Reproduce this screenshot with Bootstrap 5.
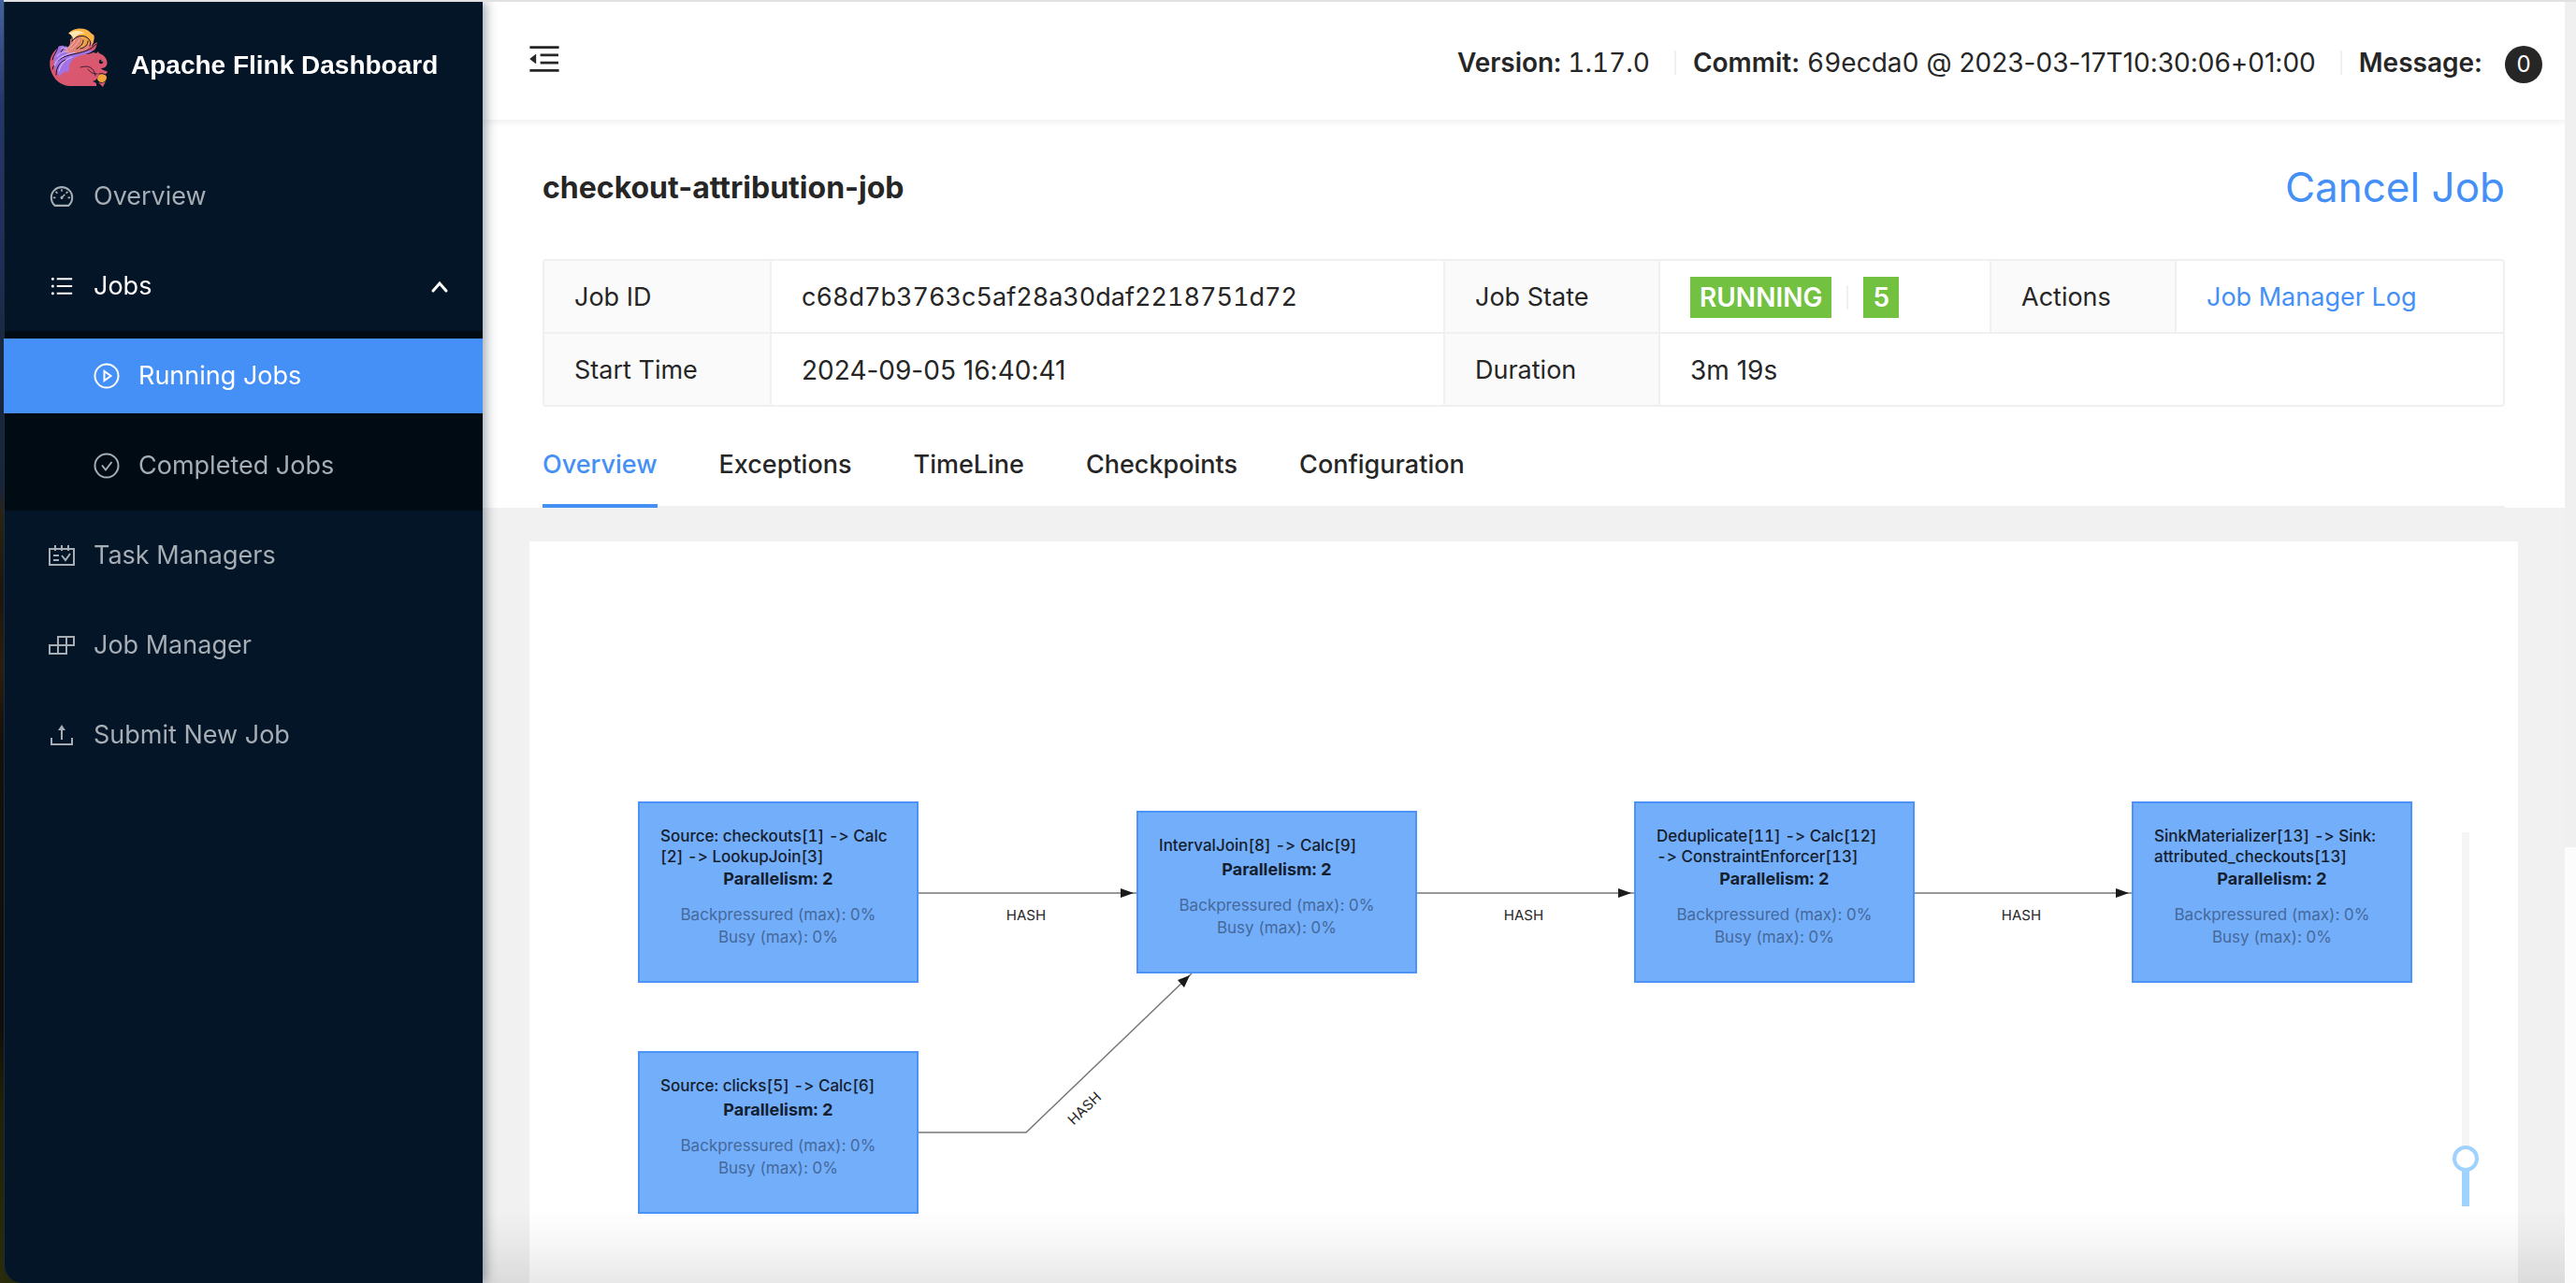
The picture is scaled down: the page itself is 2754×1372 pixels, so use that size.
<!DOCTYPE html>
<html lang="en">
<head>
<meta charset="utf-8">
<meta name="viewport" content="width=device-width, initial-scale=1">
<title>Apache Flink Web Dashboard</title>
<link href="https://cdn.jsdelivr.net/npm/bootstrap@5.3.0/dist/css/bootstrap.min.css" rel="stylesheet">
<style>
  :root { --flink-blue: #4590f7; --line: #f0f0f0; --ink: #262626; }
  body {
    font-family: Inter, "Liberation Sans", sans-serif; font-size: 27px; line-height: 44px;
    font-variant-ligatures: no-contextual;
    color: var(--ink); height: 100vh; overflow: hidden; padding-left: 4px;
    background: linear-gradient(#44639c 0, #26366a 8%, #1f2e58 20%, #1a2a42 26%, #18243a 38%, #2a2414 40%, #1c1610 46%, #2c1e10 52%, #14100c 58%, #110d0c 80%, #1f2208 86%, #2a2c0c 100%);
  }
  .even-digits { font-variant-numeric: tabular-nums; }
  .top-edge { height: 2px; background: #e1e1e1; flex: none; }
  .side-menu {
    width: 512px; background: #031526; z-index: 3; border-bottom-left-radius: 20px;
    box-shadow: 4px 0 12px rgba(0, 21, 41, .35); border-left: 1px solid #1c2c3b;
  }
  .brand { height: 128px; padding: 28px 0 0 47px; gap: 24px; color: #fff; font: 700 28px/44px "Liberation Sans", Arial, sans-serif; }
  .brand svg { width: 64px; height: 64px; }
  .brand span { margin-top: 18px; }
  .side-list { display: flex; flex-direction: column; gap: 16px; padding-top: 40px; }
  .side-list a, .side-list button {
    display: flex; align-items: center; gap: 20px; width: 100%; height: 80px;
    padding: 0 34px 0 47px; color: #a6adb4; text-decoration: none; background: none; border: 0; text-align: left;
  }
  .side-list button { color: #fff; }
  .side-list svg { width: 28px; height: 28px; flex: none; }
  .side-list .chev { width: 24px; height: 24px; margin-left: auto; }
  .sub-list { display: flex; flex-direction: column; gap: 16px; background: #010b14; padding: 8px 0; margin: 8px 0 -8px; }
  .sub-list a { padding-left: 95px; }
  .sub-list a.active { background: var(--flink-blue); color: #fff; margin-left: -1px; padding-left: 96px; width: calc(100% + 1px); }
  .ico { fill: currentColor; }
  .ico-line { fill: none; stroke: currentColor; stroke-width: 2; }
  .top-bar { height: 126px; font-size: 28px; background: #fff; box-shadow: 0 2px 8px rgba(0, 21, 41, .08); z-index: 2; padding: 0 24px 0 46px; }
  .top-bar .fold { border: 0; background: none; padding: 0; line-height: 1; color: var(--ink); }
  .top-bar .fold svg { width: 40px; height: 40px; display: block; }
  .vr-line { width: 2px; height: 26px; background: var(--line); }
  .top-bar .vr-line { margin: 0 18px 0 26px; }
  .msg-count { width: 40px; height: 40px; border-radius: 20px; background: var(--ink); color: #fff; font-size: 24px; line-height: 40px; text-align: center; }
  .job-head { background: #fff; padding: 40px 64px 0; }
  .job-name { font-size: 32px; line-height: 66px; font-weight: 700; margin: 0; }
  .cancel-link { font-size: 44px; line-height: 64px; color: var(--flink-blue); text-decoration: none; }
  .facts { width: 100%; margin-top: 43px; border: 2px solid var(--line); border-radius: 4px; border-collapse: separate; border-spacing: 0; }
  .facts th, .facts td { height: 76px; padding: 2px 30px 0 32px; font-weight: 400; vertical-align: middle; }
  .facts th { background: #fafafa; }
  .facts th, .facts td:not(:last-child) { border-right: 2px solid var(--line); }
  .facts tr:first-child > * { border-bottom: 2px solid var(--line); height: 78px; }
  .state-tag { background: #73c140; color: #fff; font-size: 28px; font-weight: 600; line-height: 44px; padding: 0 10px; }
  .when { font-size: 28px; }
  .facts a { color: var(--flink-blue); text-decoration: none; }
  .job-tabs { gap: 66px; margin-top: 24px; border-bottom: 2px solid var(--line); }
  .job-tabs a { color: var(--ink); font-weight: 500; text-decoration: none; padding: 16px 0 20px; margin-bottom: -2px; border-bottom: 4px solid transparent; }
  .job-tabs a.active { color: var(--flink-blue); border-color: var(--flink-blue); }
  .work { background: #f1f1f1; padding: 36px 50px 0; }
  .graph { background: #fff; }
  .flow-node { position: absolute; width: 300px; padding: 24px 22px 35px; background: #73aefa; border: 2px solid #4b93f8; color: #15202e; font-size: 17px; text-align: center; }
  .flow-node h2 { font-size: 17px; line-height: 22px; min-height: 24px; font-weight: 500; text-align: left; margin: 0; white-space: nowrap; }
  .flow-node p { line-height: 24px; margin: 0; }
  .flow-node .par { font-size: 18px; font-weight: 700; margin-top: 1px; }
  .flow-node .load { margin-top: 14px; color: #45699a; }
  .n-checkouts { left: 116px; top: 278px; }
  .n-clicks { left: 116px; top: 545px; }
  .n-join { left: 649px; top: 288px; }
  .n-dedup { left: 1181px; top: 278px; }
  .n-sink { left: 1713px; top: 278px; }
  .edges { position: absolute; left: 0; top: 0; width: 2126px; height: 800px; font-size: 15px; }
  .zoom-range {
    position: absolute; right: -144px; top: 497px; width: 400px; height: 28px; transform: rotate(-90deg);
    appearance: none; -webkit-appearance: none; margin: 0;
    background: linear-gradient(90deg, #a0d2ff 0 50px, #f5f5f5 50px) center / 100% 8px no-repeat; border-radius: 4px;
  }
  .zoom-range::-webkit-slider-thumb { -webkit-appearance: none; width: 28px; height: 28px; border-radius: 50%; background: #fff; border: 4px solid #a0d2ff; }
  .scroll-track { width: 12px; background: #fcfcfc; z-index: 4; }
  .scroll-thumb { height: 66%; background: #f0f0f0; }
  .fade-out { position: fixed; left: 516px; right: 0; bottom: 0; height: 80px; background: linear-gradient(transparent, rgba(0, 0, 0, .03) 45%, rgba(0, 0, 0, .09)); pointer-events: none; z-index: 2; }
</style>
</head>
<body class="d-flex flex-column">
<div class="top-edge"></div>
<div class="d-flex flex-grow-1 overflow-hidden">
  <nav class="side-menu flex-shrink-0" aria-label="Main">
    <div class="brand d-flex">
      <svg viewBox="0 0 64 64" aria-hidden="true">
        <path fill="#d9586f" d="M10 21C2 27 0 36 2 44c3 11 10 17 20 18h29c1-3-1-4-4-5 4-1 6-4 7-7 4 1 7 0 9-3-1-2-5-1-7-4 3 0 5-1 6-3 2-4-1-11-8-13l-1-2-2 2-3-1-6 2z"/>
        <path fill="#a372e2" d="M10 20c4-2 9-2 14 3 3 2 14 0 27-6 0 8-8 10-16 12-9 2-14 8-13 17-5 1-8 2-10 6C5 44 3 31 10 20z"/>
        <path fill="#e08075" d="M23 12c1 6-2 9-7 12 4 5 15 4 24 0 6-3 9-8 9-16l-15-2z"/>
        <path fill="#eda24a" d="M31 8c6 0 5 7 1 14 9-2 15-6 17-14-2-2-5-1-7-5l-9 1z"/>
        <path fill="#f9b548" d="M21 6c4-6 18-8 24-1l4 4-2 9c-2-8-7-10-13-10-4 0-6 2-9 6 1-5-1-7-4-8z"/>
        <path fill="#fde8b5" d="M21 6c6-4 13-4 18 0-7-1-10 3-14 7 0-4-1-6-4-7z"/>
        <path fill="#d9586f" d="M41 24c1-4 5-5 11-9-1 4-1 7-4 9z"/>
        <path fill="#f0a63a" d="M54 50c4-2 8-1 8 3 0 3-3 5-5 5-3 0-5-2-5-4z"/>
        <path fill="#d9586f" d="M53 58c3 1 5 1 8-1l-3 6z"/>
        <g fill="none" stroke="#1a1026" stroke-linecap="round">
          <path stroke-width="1" d="M4 44C6 35 16 30 26 28s19-4 25-11M8 50c0-8 4-14 10-16M10 20c-1 6-5 8-6 14M18 18c-2 4-4 5-5 9M49 8c1 4 0 7-2 11M21 6c4 2 5 4 4 8M25 14c4-6 13-8 18-2 2 2 2 5 1 7M37 13c0 4-3 7-7 9M42 14c0 4-3 7-8 8M54 49c3-1 6 0 8 2"/>
          <path stroke-width=".8" d="M34 42c9-3 15 1 16 9M42 44c3 4 6 5 10 5"/>
        </g>
        <g fill="none" stroke="#cfb2fb" stroke-width="1.200" stroke-linecap="round"><path d="M6 40c4-9 12-12 22-14M9 30c3-4 7-5 12-5M11 46c1-6 6-12 14-15M14 22c2-2 4-1 6 1"/></g>
        <g fill="none" stroke="#f3b6a3" stroke-width="1" stroke-linecap="round"><path d="M33 12c-2 5-6 9-10 11M28 13c-1 4-4 6-7 8"/></g>
        <circle cx="56" cy="36" r="2.200" fill="#17101f"/><circle cx="57" cy="35" r=".7" fill="#fff"/>
      </svg>
      <span>Apache Flink Dashboard</span>
    </div>
    <ul class="side-list list-unstyled m-0">
      <li><a href="#"><svg class="ico" viewBox="0 0 1024 1024"><path d="M924.8 385.6a446.7 446.7 0 00-96-142.4 446.7 446.7 0 00-142.4-96C631.1 123.8 572.5 112 512 112s-119.1 11.8-174.4 35.2a446.7 446.7 0 00-142.4 96 446.7 446.7 0 00-96 142.4C75.8 440.9 64 499.500 64 560c0 132.7 58.3 257.7 159.9 343.1l1.7 1.4c5.8 4.8 13.1 7.5 20.600 7.5h531.7c7.5 0 14.8-2.7 20.600-7.5l1.7-1.4C901.7 817.7 960 692.7 960 560c0-60.500-11.900-119.100-35.200-174.400zM761.4 836H262.6A371.12 371.12 0 01140 560c0-99.4 38.7-192.8 109-263 70.3-70.3 163.7-109 263-109 99.4 0 192.8 38.7 263 109 70.3 70.3 109 163.7 109 263 0 105.6-44.5 205.5-122.6 276zM623.5 421.5a8.03 8.03 0 00-11.3 0L527.7 506c-18.7-5-39.4-.2-54.1 14.5a55.95 55.95 0 000 79.2 55.95 55.95 0 0079.2 0 55.87 55.87 0 0014.5-54.1l84.5-84.5c3.1-3.1 3.1-8.2 0-11.3l-28.3-28.3zM490 320h44c4.4 0 8-3.6 8-8v-80c0-4.4-3.6-8-8-8h-44c-4.4 0-8 3.6-8 8v80c0 4.4 3.6 8 8 8zm260 218v44c0 4.4 3.6 8 8 8h80c4.4 0 8-3.6 8-8v-44c0-4.4-3.6-8-8-8h-80c-4.4 0-8 3.6-8 8zm12.7-197.2l-31.1-31.1a8.03 8.03 0 00-11.3 0l-56.6 56.6a8.03 8.03 0 000 11.3l31.1 31.1c3.1 3.1 8.2 3.1 11.3 0l56.6-56.6c3.1-3.1 3.1-8.2 0-11.3zm-458.6-31.1a8.03 8.03 0 00-11.3 0l-31.1 31.1a8.03 8.03 0 000 11.3l56.6 56.6c3.1 3.1 8.2 3.1 11.3 0l31.1-31.1c3.1-3.1 3.1-8.2 0-11.3l-56.6-56.6zM262 530h-80c-4.4 0-8 3.6-8 8v44c0 4.4 3.6 8 8 8h80c4.4 0 8-3.6 8-8v-44c0-4.4-3.6-8-8-8z"/></svg>Overview</a></li>
      <li>
        <button type="button" aria-expanded="true"><svg class="ico" viewBox="0 0 1024 1024"><path d="M912 192H328c-4.400 0-8 3.600-8 8v56c0 4.400 3.600 8 8 8h584c4.400 0 8-3.600 8-8v-56c0-4.400-3.600-8-8-8zm0 284H328c-4.400 0-8 3.600-8 8v56c0 4.400 3.600 8 8 8h584c4.400 0 8-3.600 8-8v-56c0-4.400-3.600-8-8-8zm0 284H328c-4.400 0-8 3.600-8 8v56c0 4.400 3.600 8 8 8h584c4.400 0 8-3.600 8-8v-56c0-4.400-3.600-8-8-8zM104 228a56 56 0 10112 0 56 56 0 10-112 0zm0 284a56 56 0 10112 0 56 56 0 10-112 0zm0 284a56 56 0 10112 0 56 56 0 10-112 0z"/></svg>Jobs
          <svg class="chev ico-line" viewBox="0 0 24 24"><path stroke-width="3" stroke-linecap="round" d="M5 17l7-8 7 8"/></svg></button>
        <ul class="sub-list list-unstyled">
          <li><a class="active" href="#"><svg class="ico-line" viewBox="0 0 28 28"><circle cx="14" cy="14" r="12.500"/><path d="M11.500 9v10l7-5z"/></svg>Running Jobs</a></li>
          <li><a href="#"><svg class="ico-line" viewBox="0 0 28 28"><circle cx="14" cy="14" r="12.500"/><path d="M9 13.500l4 5L19.500 10"/></svg>Completed Jobs</a></li>
        </ul>
      </li>
      <li><a href="#"><svg class="ico-line" viewBox="0 0 28 28"><path d="M1 7h26v17H1zM7 3v6M14 3v6M21 3v6M5 14h6M5 19h6M14 14l4 5 5-7"/></svg>Task Managers</a></li>
      <li><a href="#"><svg class="ico-line" viewBox="0 0 28 28"><path d="M10 5h17v9H10zM1 14h18v9H1zM10 14v9M19 5v9"/></svg>Job Manager</a></li>
      <li><a href="#"><svg class="ico-line" viewBox="0 0 28 28"><path d="M3 17v7h22v-7M14 8v11"/><path fill="currentColor" stroke="none" d="M14 3l4 6h-8z"/></svg>Submit New Job</a></li>
    </ul>
  </nav>
  <div class="d-flex flex-column flex-grow-1 overflow-hidden">
    <header class="top-bar d-flex align-items-center justify-content-between flex-shrink-0">
      <button class="fold mb-1" type="button" aria-label="Fold menu"><svg class="ico" viewBox="0 0 1024 1024"><path d="M408 442h480c4.400 0 8-3.600 8-8v-56c0-4.400-3.600-8-8-8H408c-4.400 0-8 3.600-8 8v56c0 4.400 3.600 8 8 8zm-8 204c0 4.400 3.600 8 8 8h480c4.400 0 8-3.600 8-8v-56c0-4.400-3.600-8-8-8H408c-4.400 0-8 3.600-8 8v56zm504-486H120c-4.400 0-8 3.600-8 8v56c0 4.400 3.600 8 8 8h784c4.400 0 8-3.600 8-8v-56c0-4.400-3.600-8-8-8zm0 632H120c-4.400 0-8 3.600-8 8v56c0 4.400 3.600 8 8 8h784c4.400 0 8-3.600 8-8v-56c0-4.400-3.600-8-8-8zM115.400 518.900L271.700 642c5.800 4.600 14.400.5 14.400-6.900V388.900c0-7.400-8.500-11.500-14.400-6.900L115.400 505.100a8.740 8.740 0 000 13.800z"/></svg></button>
      <div class="d-flex align-items-center mt-1">
        <span class="even-digits"><strong class="fw-semibold">Version:</strong> 1.17.0</span><i class="vr-line"></i>
        <span><strong class="fw-semibold">Commit:</strong> <span class="even-digits">69ecda0</span> @ 2023-03-17T10:30:06+01:00</span><i class="vr-line"></i>
        <strong class="fw-semibold me-4">Message:</strong><span class="msg-count mt-1">0</span>
      </div>
    </header>
    <main class="d-flex flex-column flex-grow-1">
      <section class="job-head">
        <div class="d-flex justify-content-between"><h1 class="job-name">checkout-attribution-job</h1><a class="cancel-link" href="#">Cancel Job</a></div>
        <table class="facts">
          <colgroup><col style="width:243px"><col style="width:720px"><col style="width:230px"><col style="width:354px"><col style="width:198px"><col></colgroup>
          <tbody>
            <tr><th scope="row">Job ID</th><td class="even-digits">c68d7b3763c5af28a30daf2218751d72</td><th scope="row">Job State</th>
              <td><div class="d-flex align-items-center gap-3"><span class="state-tag">RUNNING</span><i class="vr-line"></i><span class="state-tag">5</span></div></td>
              <th scope="row">Actions</th><td><a href="#">Job Manager Log</a></td></tr>
            <tr><th scope="row">Start Time</th><td class="when">2024-09-05 16:40:41</td><th scope="row">Duration</th><td class="when" colspan="3">3m 19s</td></tr>
          </tbody>
        </table>
        <nav class="job-tabs d-flex" aria-label="Job">
          <a class="active" href="#">Overview</a><a href="#">Exceptions</a><a href="#">TimeLine</a><a href="#">Checkpoints</a><a href="#">Configuration</a>
        </nav>
      </section>
      <section class="work flex-grow-1 d-flex">
        <div class="graph even-digits flex-grow-1 position-relative">
          <svg class="edges" viewBox="0 0 2126 800">
            <g fill="none" stroke="#777" stroke-width="1.500"><path d="M416 376h233M948 376h233M1480 376h233M416 632h115l177-170"/></g>
            <g fill="#1b1b1b"><path d="M632 371l14 5-14 5zM1164 371l14 5-14 5zM1696 371l14 5-14 5zM706 464l-6 13-7-8z"/></g>
            <g text-anchor="middle" fill="#262626"><text x="531" y="405">HASH</text><text x="1063" y="405">HASH</text><text x="1595" y="405">HASH</text><text transform="translate(597 610) rotate(-44)">HASH</text></g>
          </svg>
          <article class="flow-node n-checkouts"><h2>Source: checkouts[1] -&gt; Calc<br>[2] -&gt; LookupJoin[3]</h2><p class="par">Parallelism: 2</p><p class="load">Backpressured (max): 0%<br>Busy (max): 0%</p></article>
          <article class="flow-node n-clicks"><h2>Source: clicks[5] -&gt; Calc[6]</h2><p class="par">Parallelism: 2</p><p class="load">Backpressured (max): 0%<br>Busy (max): 0%</p></article>
          <article class="flow-node n-join"><h2>IntervalJoin[8] -&gt; Calc[9]</h2><p class="par">Parallelism: 2</p><p class="load">Backpressured (max): 0%<br>Busy (max): 0%</p></article>
          <article class="flow-node n-dedup"><h2>Deduplicate[11] -&gt; Calc[12]<br>-&gt; ConstraintEnforcer[13]</h2><p class="par">Parallelism: 2</p><p class="load">Backpressured (max): 0%<br>Busy (max): 0%</p></article>
          <article class="flow-node n-sink"><h2>SinkMaterializer[13] -&gt; Sink:<br>attributed_checkouts[13]</h2><p class="par">Parallelism: 2</p><p class="load">Backpressured (max): 0%<br>Busy (max): 0%</p></article>
          <input class="zoom-range" type="range" min="0" max="100" value="10" aria-label="Zoom">
        </div>
      </section>
    </main>
  </div>
  <div class="scroll-track flex-shrink-0"><div class="scroll-thumb"></div></div>
</div>
<div class="fade-out"></div>
<script src="https://cdn.jsdelivr.net/npm/bootstrap@5.3.0/dist/js/bootstrap.bundle.min.js"></script>
</body>
</html>
